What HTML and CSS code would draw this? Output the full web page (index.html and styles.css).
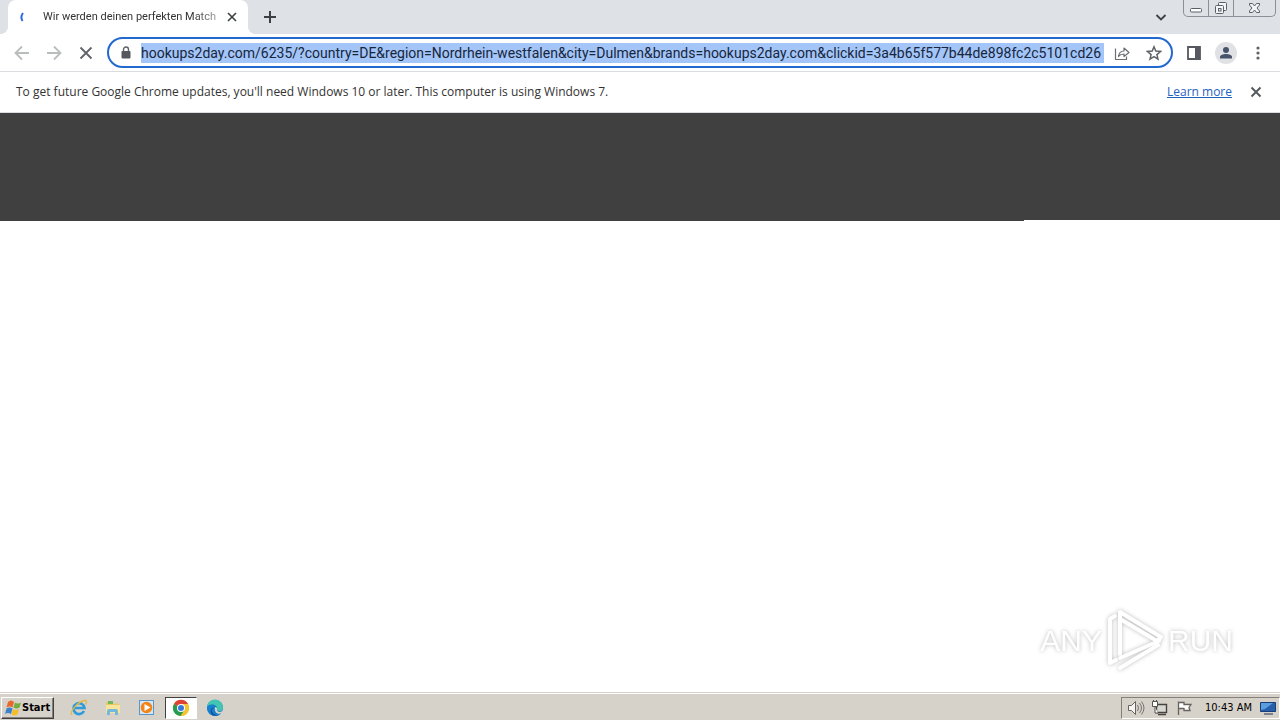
FILE: index.html
```html
<!DOCTYPE html>
<html lang="en">
<head>
<meta charset="utf-8">
<title>Wir werden deinen perfekten Match</title>
<link rel="stylesheet" href="styles.css">
</head>
<body>
<header class="tabstrip">
  <div class="tab">
    <svg class="spinner" width="16" height="16" viewBox="0 0 16 16"><path d="M3 4Q0 8 2.500 12" fill="none" stroke="#2b6be4" stroke-width="2"/></svg>
    <span class="tab-title">Wir werden deinen perfekten Match</span>
    <button class="icon-btn tab-close" aria-label="Close tab"><svg width="16" height="16" viewBox="0 0 16 16"><path d="M4 4l8 8M12 4l-8 8" stroke="#3c4043" stroke-width="1.6"/></svg></button>
  </div>
  <button class="icon-btn new-tab" aria-label="New tab"><svg width="16" height="16" viewBox="0 0 16 16"><path d="M8 2v12M2 8h12" stroke="#3c4043" stroke-width="2"/></svg></button>
  <button class="icon-btn tab-search" aria-label="Search tabs"><svg width="16" height="16" viewBox="0 0 16 16"><path d="M3.500 6L8 10.500l4.500-4.500" fill="none" stroke="#3c4043" stroke-width="1.800"/></svg></button>
  <div class="window-controls">
    <button aria-label="Minimize"><svg width="24" height="16" viewBox="0 0 24 16"><rect x="6.500" y="8.500" width="11" height="3.500" rx="1" fill="#fff" stroke="#5b5f69"/></svg></button>
    <button aria-label="Restore"><svg width="24" height="16" viewBox="0 0 24 16"><g fill="#f4f5f7" stroke="#5b5f69"><rect x="9.500" y="2.500" width="8" height="8" rx="1"/><rect x="6.500" y="5.500" width="8" height="8" rx="1"/><rect x="9.500" y="8.500" width="2.500" height="2.500"/></g></svg></button>
    <button aria-label="Close"><svg width="41" height="16" viewBox="0 0 41 16"><path d="M15.500 3.500h3l2 2.500 2-2.500h3v1.500l-2.500 3 2.500 3v1.500h-3l-2-2.500-2 2.500h-3v-1.500l2.500-3-2.500-3z" fill="#f4f5f7" stroke="#5b5f69"/></svg></button>
  </div>
</header>
<nav class="toolbar">
  <button class="icon-btn" aria-label="Back"><svg width="16" height="16" viewBox="0 0 16 16"><path d="M15 8H2M8 1.500L1.500 8 8 14.500" fill="none" stroke="#babcbe" stroke-width="1.800"/></svg></button>
  <button class="icon-btn" aria-label="Forward"><svg width="16" height="16" viewBox="0 0 16 16"><path d="M1 8h13M8 1.500L14.500 8 8 14.500" fill="none" stroke="#babcbe" stroke-width="1.800"/></svg></button>
  <button class="icon-btn" aria-label="Stop"><svg width="16" height="16" viewBox="0 0 16 16"><path d="M2.500 2.500l11 11M13.500 2.500l-11 11" stroke="#5f6368" stroke-width="1.800"/></svg></button>
  <div class="omnibox">
    <svg width="12" height="14" viewBox="0 0 12 14"><path d="M3.500 6V3.500a2.500 2.500 0 015 0V6" fill="none" stroke="#5f6368" stroke-width="1.400"/><rect x="1.500" y="5" width="9" height="7.500" rx="1" fill="#55595e"/></svg>
    <input class="url" aria-label="Address" spellcheck="false" value="hookups2day.com/6235/?country=DE&amp;region=Nordrhein-westfalen&amp;city=Dulmen&amp;brands=hookups2day.com&amp;clickid=3a4b65f577b44de898fc2c5101cd26">
    <button class="icon-btn" aria-label="Share"><svg width="16" height="16" viewBox="0 0 16 16"><path d="M1.500 3.500V14.500h11v-3M4.500 11.500C5 7.500 7 6 10 6V3l5 4.500-5 4V9C7.500 9 6 9.500 4.500 11.500z" fill="none" stroke="#6a6e73" stroke-width="1.200" stroke-linejoin="round"/></svg></button>
    <button class="icon-btn" aria-label="Bookmark"><svg width="16" height="16" viewBox="0 0 16 16"><path d="M8 1.800l1.800 4.300 4.700.4-3.600 3.100 1.100 4.600L8 11.700l-4 2.500 1.100-4.600-3.600-3.100 4.700-.4z" fill="none" stroke="#5f6368" stroke-width="1.500"/></svg></button>
  </div>
  <button class="icon-btn" aria-label="Side panel"><svg width="16" height="16" viewBox="0 0 16 16"><path d="M2 2h12v12H2z" fill="none" stroke="#55585e" stroke-width="1.800"/><path d="M9 2h5v12H9z" fill="#55585e"/></svg></button>
  <button class="icon-btn profile" aria-label="Profile"><svg width="22" height="22" viewBox="0 0 22 22"><circle cx="11" cy="11" r="11" fill="#dfe1e5"/><circle cx="11" cy="8" r="3" fill="#47536b"/><path d="M5 16.500v-1.500c0-4 12-4 12 0v1.500z" fill="#47536b"/></svg></button>
  <button class="icon-btn" aria-label="Menu"><svg width="16" height="16" viewBox="0 0 16 16" fill="#5f6368"><circle cx="8" cy="3" r="1.600"/><circle cx="8" cy="8" r="1.600"/><circle cx="8" cy="13" r="1.600"/></svg></button>
</nav>
<section class="infobar">
  <p>To get future Google Chrome updates, you'll need Windows 10 or later. This computer is using Windows 7.</p>
  <a href="#">Learn more</a>
  <button class="icon-btn" aria-label="Dismiss"><svg width="16" height="16" viewBox="0 0 16 16"><path d="M3.500 3.500l9 9M12.500 3.500l-9 9" stroke="#55585c" stroke-width="1.900"/></svg></button>
</section>
<main class="page">
  <div class="banner"></div>
  <div class="banner-edge"></div>
  <div class="watermark">
    <span>ANY</span>
    <svg width="60" height="66" viewBox="0 0 60 66"><g fill="none" stroke="#fff" stroke-width="4" stroke-linejoin="round" stroke-linecap="round"><path d="M10 8L5 11V55l6-3"/><path d="M15 46V4l41 25-4 4L15 11"/><path d="M15 50l39-17"/><path d="M15 60l38-23"/></g></svg>
    <span>RUN</span>
  </div>
</main>
<footer class="taskbar">
  <button class="start"><svg width="17" height="16" viewBox="0 0 17 16"><path d="M3 2q3-3 6 0L7.500 7.500q-3-2-6 0z" fill="#e8682c"/><path d="M10 2.500q3 2 6 0l-1.500 5q-3 2-6 0z" fill="#72ad3d"/><path d="M1.500 8.500q3-2 6 0L6 14q-3-2-6 0z" fill="#3b82cd"/><path d="M8 9q3 2 6 0l-1.500 5.500q-3 2-6 0z" fill="#f5bd29"/></svg>Start</button>
  <div class="launchers">
    <button class="task" aria-label="Internet Explorer"><svg width="18" height="18" viewBox="0 0 18 18"><path d="M14 12a5.500 5.500 0 11.500-3H5" fill="none" stroke="#2d9bdc" stroke-width="2.600"/><path d="M2 16C-1 13 8 3 14 1.500c3-.7 3 1.500 1.500 4" fill="none" stroke="#e5b940" stroke-width="1.300"/></svg></button>
    <button class="task" aria-label="Explorer"><svg width="18" height="18" viewBox="0 0 18 18"><path d="M2 3h5l1 1.500h7V14H2z" fill="#e7c768"/><path d="M4 2h5v3H4z" fill="#70b85b"/><path d="M2 6h14v8H2z" fill="#f8e49b"/><path d="M3 16v-4q0-2 2-2h7q2 0 2 2v4h-3v-3H6v3z" fill="#75b8dc"/></svg></button>
    <button class="task" aria-label="Media Player"><svg width="18" height="18" viewBox="0 0 18 18"><rect x="1.500" y="1.500" width="14" height="14" fill="#d5e6f5" stroke="#5797cc"/><circle cx="8.500" cy="8.500" r="5.800" fill="#f28418"/><path d="M6.500 5v7l6-3.500z" fill="#fff"/></svg></button>
    <button class="task active" aria-label="Chrome"><svg width="18" height="18" viewBox="0 0 18 18"><circle cx="9" cy="9" r="8" fill="#e7b92b"/><path d="M9 9L2 5a8 8 0 0114 0z" fill="#dc4335"/><path d="M9 9L2 5a8 8 0 006.500 12L12.500 11z" fill="#279b50"/><path d="M9 5h7a8 8 0 01-7 12l3.500-6z" fill="#f4c52e"/><circle cx="9" cy="9" r="4" fill="#fff"/><circle cx="9" cy="9" r="3" fill="#3878dd"/></svg></button>
    <button class="task" aria-label="Edge"><svg width="18" height="18" viewBox="0 0 18 18"><circle cx="9" cy="9" r="8" fill="#1774bd"/><path d="M1 8a8 8 0 0116 1c0 4-6 4-6 1.500C12 6 5 3 1 8z" fill="#42c5b2"/><path d="M1 8c4-5 10-1 9 2-1 4 3 5 6 3-3 6-15 5-15-5z" fill="#1681ce"/><path d="M8 8c-5 4 0 9 5 8-10 3-10-7-5-8z" fill="#124d91"/><path d="M9 8q3 1 2 3c0 2 4 3 6 0l-1 3c-4 2-8 0-7-6z" fill="#d6d3ce"/></svg></button>
  </div>
  <div class="tray">
    <svg width="18" height="16" viewBox="0 0 18 16"><path d="M1.500 5.500h3l4-4v13l-4-4h-3z" fill="#f6f5f2" stroke="#66635e"/><path d="M10.500 5q2 3 0 6M12.500 3q4 5 0 10M14.500 1.500q5 6.500 0 13" fill="none" stroke="#77746f"/></svg>
    <svg width="18" height="16" viewBox="0 0 18 16"><path d="M5.500 4.500h10v8h-10z" fill="#d9d7d2" stroke="#46433f" stroke-width="1.400"/><path d="M7 14.500h8" stroke="#46433f" stroke-width="1.500"/><path d="M1.500 1.500h5v5h-5zM4 7v6h3M2.500 0v2M5.500 0v2" fill="#fff" stroke="#55524d"/></svg>
    <svg width="18" height="16" viewBox="0 0 18 16"><path d="M3.500 15V1.500M4 2.500h5v2h7l-2 3 1 3H9v-2H4" fill="#fff" stroke="#66635e" stroke-width="1.300"/></svg>
    <time>10:43 AM</time>
    <svg width="16" height="16" viewBox="0 0 16 16"><path d="M.5 2.500h15v9H.5z" fill="#285fa9" stroke="#173e79"/><path d="M1 3h12L5 9 1 10z" fill="#5b9ede"/><path d="M4 14h9" stroke="#78828e" stroke-width="2"/></svg>
  </div>
</footer>
</body>
</html>
```
FILE: styles.css
```css
* { box-sizing: border-box; }
body {
  margin: 0;
  min-height: 100vh;
  display: flex;
  flex-direction: column;
  background: #fff;
  color: #333;
  font: 12px/16px "Open Sans", sans-serif;
}
svg { display: block; flex: none; }
button { border: 0; padding: 0; background: none; font: inherit; color: inherit; }
.icon-btn { flex: none; display: flex; align-items: center; justify-content: center; }

.tabstrip { display: flex; align-items: center; height: 34px; background: #dee1e6; padding-left: 8px; }
.tab {
  position: relative;
  display: flex;
  align-items: center;
  width: 240px;
  height: 34px;
  padding: 0 8px 0 12px;
  background: #fff;
  border-radius: 8px 8px 0 0;
  font-family: Roboto, sans-serif;
}
.tab::before, .tab::after { content: ""; position: absolute; bottom: 0; width: 8px; height: 8px; }
.tab::before { right: 100%; background: radial-gradient(circle at 0 0, transparent 8px, #fff 8px); }
.tab::after { left: 100%; background: radial-gradient(circle at 100% 0, transparent 8px, #fff 8px); }
.tab-title {
  flex: 1;
  margin-left: 7px;
  white-space: nowrap;
  font-size: 11px;
  -webkit-mask-image: linear-gradient(90deg, #000 85%, rgba(0, 0, 0, .4));
  mask-image: linear-gradient(90deg, #000 85%, rgba(0, 0, 0, .4));
}
.tab-close { margin-left: 5px; }
.new-tab { margin-left: 14px; }
.tab-search { margin-left: auto; margin-right: 14px; }
.window-controls {
  display: flex;
  align-self: flex-start;
  height: 17px;
  margin-right: 4px;
  border: 1px solid #8b8f98;
  border-top: 0;
  border-radius: 0 0 5px 5px;
}
.window-controls button + button { border-left: 1px solid #8b8f98; }

.toolbar { display: flex; align-items: center; gap: 16px; height: 38px; padding: 0 14px; border-bottom: 1px solid #dadce0; }
.omnibox {
  flex: 1;
  min-width: 0;
  display: flex;
  align-items: center;
  gap: 16px;
  height: 31px;
  margin: 0 -3px;
  padding: 0 9px 0 11px;
  border: 2px solid #2168cf;
  border-radius: 16px;
}
.url {
  flex: 1;
  min-width: 0;
  height: 20px;
  margin: 0 -6px 0 -7px;
  padding: 0;
  border: 0;
  outline: 0;
  background: #a3c5f7;
  color: #17263d;
  font: 14px/20px Roboto, sans-serif;
}
.profile { margin: 0 -3px; }

.infobar { display: flex; align-items: center; height: 41px; padding: 0 16px; border-bottom: 1px solid #dadce0; }
.infobar p { flex: 1; margin: 0; }
.infobar a { color: #1f62bd; margin-right: 16px; }

.page { flex: 1; display: flex; flex-direction: column; }
.banner { height: 107px; background: #404040; }
.banner-edge { width: 80%; height: 1px; background: #404040; }
.watermark {
  display: flex;
  align-items: center;
  align-self: flex-end;
  gap: 3px;
  margin-top: auto;
  margin-right: 47px;
  margin-bottom: 18px;
  color: #fff;
  font: 30px/48px "Liberation Sans Narrow", "Liberation Sans", sans-serif;
  filter: drop-shadow(0 0 2px #bbb);
}

.taskbar {
  display: flex;
  align-items: center;
  height: 28px;
  padding: 2px 0 0 1px;
  background: #d6d1c9;
  border-top: 1px solid #d6d1c9;
  box-shadow: inset 0 1px #fff;
  color: #000;
  font: 11px/16px "DejaVu Sans Condensed", "DejaVu Sans", sans-serif;
}
.start {
  display: flex;
  align-items: center;
  height: 22px;
  padding: 0 3px;
  border: 1px solid;
  border-color: #fff #404040 #404040 #fff;
  box-shadow: inset -1px -1px #85817a;
  font-weight: bold;
}
.launchers { display: flex; gap: 2px; margin-left: 9px; }
.task { display: flex; align-items: center; justify-content: center; width: 32px; height: 22px; border: 1px solid transparent; }
.task.active { background: #fff; border-color: #404040 #fff #fff #404040; }
.tray {
  display: flex;
  align-items: center;
  gap: 6px;
  height: 22px;
  margin-left: auto;
  padding: 0 3px 0 5px;
  border: 1px solid;
  border-color: #85817a #fff #fff #85817a;
}
.tray time { margin: 0 2px 0 6px; }
```
